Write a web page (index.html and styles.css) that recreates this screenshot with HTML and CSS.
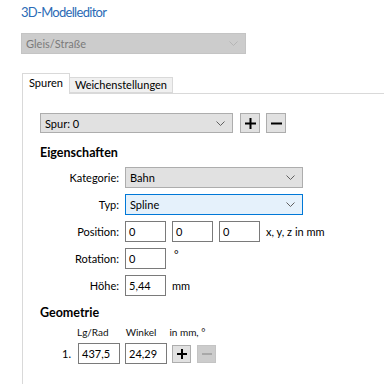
FILE: index.html
```html
<!DOCTYPE html>
<html lang="de">
<head>
    <meta charset="UTF-8">
    <title>3D-Modelleditor</title>
    <link rel="stylesheet" href="styles.css">
</head>
<body>
    <div class="page">
        <h1 class="title">3D-Modelleditor</h1>
        <div class="combo combo-disabled wide">
            <span>Gleis/Straße</span>
            <svg class="chev" width="9" height="5" viewBox="0 0 9 5"><path d="M0.5 0.5 L4.5 4.5 L8.5 0.5" fill="none" stroke="#b5b5b5" stroke-width="1"/></svg>
        </div>

        <div class="tabs">
            <div class="tab active">Spuren</div>
            <div class="tab">Weichenstellungen</div>
        </div>

        <div class="panel">
            <div class="spur-row">
                <div class="combo spur">
                    <span>Spur: 0</span>
                    <svg class="chev" width="9" height="5" viewBox="0 0 9 5"><path d="M0.5 0.5 L4.5 4.5 L8.5 0.5" fill="none" stroke="#606060" stroke-width="1"/></svg>
                </div>
                <button class="btn add">
                    <svg width="11" height="11" viewBox="0 0 11 11"><path d="M0 5.5 H11 M5.5 0 V11" stroke="#000" stroke-width="2"/></svg>
                </button>
                <button class="btn">
                    <svg width="11" height="11" viewBox="0 0 11 11"><path d="M0 5.5 H11" stroke="#000" stroke-width="2"/></svg>
                </button>
            </div>

            <div class="section-title">Eigenschaften</div>
            <div class="form-grid">
                <label>Kategorie:</label>
                <div class="combo field">
                    <span>Bahn</span>
                    <svg class="chev" width="9" height="5" viewBox="0 0 9 5"><path d="M0.5 0.5 L4.5 4.5 L8.5 0.5" fill="none" stroke="#606060" stroke-width="1"/></svg>
                </div>

                <label>Typ:</label>
                <div class="combo field focused">
                    <span>Spline</span>
                    <svg class="chev" width="9" height="5" viewBox="0 0 9 5"><path d="M0.5 0.5 L4.5 4.5 L8.5 0.5" fill="none" stroke="#606060" stroke-width="1"/></svg>
                </div>

                <label>Position:</label>
                <div class="inline">
                    <div class="input">0</div>
                    <div class="input">0</div>
                    <div class="input">0</div>
                    <span class="unit">x, y, z in mm</span>
                </div>

                <label>Rotation:</label>
                <div class="inline">
                    <div class="input">0</div>
                    <span class="unit deg">°</span>
                </div>

                <label>Höhe:</label>
                <div class="inline">
                    <div class="input">5,44</div>
                    <span class="unit">mm</span>
                </div>
            </div>

            <div class="section-title geo">Geometrie</div>
            <div class="geo-head">
                <span class="h-len">Lg/Rad</span>
                <span class="h-ang">Winkel</span>
                <span class="h-unit">in mm, °</span>
            </div>
            <div class="geo-row">
                <span class="num">1.</span>
                <div class="input geo-input">437,5</div>
                <div class="input geo-input">24,29</div>
                <button class="btn small">
                    <svg width="10" height="10" viewBox="0 0 10 10"><path d="M0 5 H10 M5 0 V10" stroke="#000" stroke-width="2"/></svg>
                </button>
                <button class="btn small disabled">
                    <svg width="10" height="10" viewBox="0 0 10 10"><path d="M0 5 H10" stroke="#a8a8a8" stroke-width="2"/></svg>
                </button>
            </div>
        </div>
    </div>
</body>
</html>
```

FILE: styles.css
```css
body, html {
    margin: 0;
    background-color: #fff;
    font-family: Lato, "Noto Sans", sans-serif;
    font-size: 11px;
    color: #000;
}
.page {
    padding-left: 21px;
    overflow: hidden;
    height: 384px;
}
.title {
    margin: 0 0 9px 0;
    font-size: 13px;
    font-weight: normal;
    letter-spacing: -0.7px;
    line-height: 24px;
    color: #2b6bb6;
}
.combo {
    display: flex;
    align-items: center;
    justify-content: space-between;
    box-sizing: border-box;
    height: 21px;
    padding: 0 7px 0 4px;
    background-color: #e1e1e1;
    border: 1px solid #adadad;
}
.combo-disabled {
    background-color: #cccccc;
    border-color: #c4c4c4;
    color: #7a7a7a;
}
.wide {
    width: 225px;
}
.chev {
    display: block;
}
.tabs {
    display: flex;
    align-items: flex-end;
    margin-top: 19px;
    margin-left: 1px;
    position: relative;
    z-index: 1;
}
.tab {
    box-sizing: border-box;
    height: 16px;
    line-height: 14px;
    padding: 0 5px;
    background-color: #f0f0f0;
    border: 1px solid #d9d9d9;
    border-left: none;
}
.tab.active {
    height: 21px;
    line-height: 18px;
    padding: 0 6px;
    background-color: #fff;
    border-left: 1px solid #d9d9d9;
    border-bottom: none;
    margin-bottom: -1px;
}
.panel {
    margin-left: 1px;
    border-left: 1px solid #d9d9d9;
    border-top: 1px solid #d9d9d9;
    padding: 19px 0 40px 17px;
}
.spur-row {
    display: flex;
    align-items: center;
}
.spur {
    width: 193px;
    height: 20px;
}
.btn {
    display: flex;
    align-items: center;
    justify-content: center;
    box-sizing: border-box;
    width: 20px;
    height: 20px;
    margin-left: 6px;
    padding: 0;
    background-color: #e1e1e1;
    border: 1px solid #adadad;
}
.btn svg {
    display: block;
}
.btn.add {
    margin-left: 7px;
}
.section-title {
    margin-top: 12px;
    font-size: 12.5px;
    font-weight: bold;
    line-height: 16px;
}
.form-grid {
    display: grid;
    grid-template-columns: 79px auto;
    column-gap: 6px;
    row-gap: 6px;
    margin-top: 6px;
}
.form-grid label {
    text-align: right;
    line-height: 21px;
}
.field {
    width: 178px;
}
.focused {
    background-color: #e5f1fb;
    border-color: #0078d7;
}
.inline {
    display: flex;
    align-items: center;
}
.input {
    box-sizing: border-box;
    width: 41px;
    height: 21px;
    margin-right: 6px;
    padding-left: 3px;
    line-height: 19px;
    background-color: #fff;
    border: 1px solid #7a7a7a;
}
.deg {
    align-self: flex-start;
    line-height: 14px;
    margin-left: 2px;
}
.geo {
    margin-top: 9px;
}
.geo-head {
    display: flex;
    font-size: 10px;
    line-height: 14px;
    margin-top: 4px;
    color: #111;
}
.h-len {
    margin-left: 37px;
}
.h-ang {
    margin-left: 17px;
}
.h-unit {
    margin-left: 13px;
}
.geo-row {
    display: flex;
    align-items: center;
    margin-top: 4px;
}
.num {
    width: 16px;
    margin-left: 22px;
}
.geo-input {
    width: 42px;
    margin-right: 5px;
}
.btn.small {
    width: 19px;
    height: 18px;
    margin-left: 0;
    margin-right: 6px;
}
.btn.disabled {
    background-color: #cccccc;
    border-color: #c4c4c4;
}
```
